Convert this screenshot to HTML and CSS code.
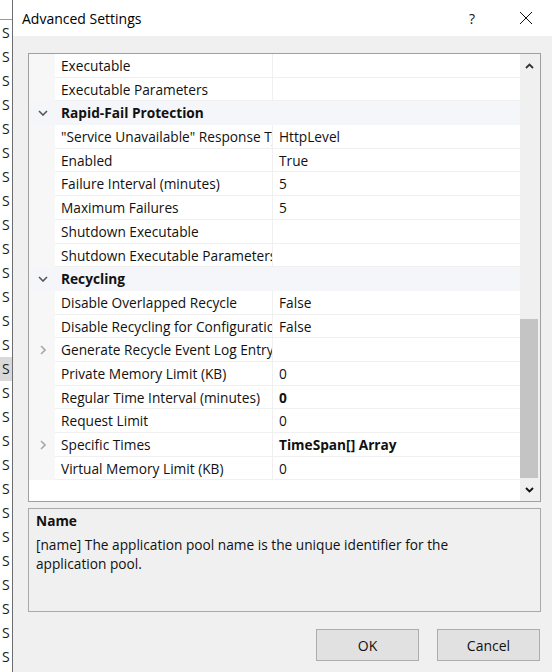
FILE: index.html
```html
<!DOCTYPE html>
<html>
<head>
<meta charset="utf-8">
<link rel="stylesheet" href="styles.css">
</head>
<body>
<div class="screen">
  <div class="behind">
    <div class="behind-head"></div>
    <div class="behind-list">
      <div class="bi">S</div><div class="bi">S</div><div class="bi">S</div><div class="bi">S</div><div class="bi">S</div>
      <div class="bi">S</div><div class="bi">S</div><div class="bi">S</div><div class="bi">S</div><div class="bi">S</div>
      <div class="bi">S</div><div class="bi">S</div><div class="bi">S</div><div class="bi">S</div><div class="bi sel">S</div>
      <div class="bi">S</div><div class="bi">S</div><div class="bi">S</div><div class="bi">S</div><div class="bi">S</div>
      <div class="bi">S</div><div class="bi">S</div><div class="bi">S</div><div class="bi">S</div><div class="bi">S</div>
      <div class="bi">S</div><div class="bi">S</div>
    </div>
  </div>
  <div class="dialog">
    <div class="titlebar">
      <span class="title">Advanced Settings</span>
      <span class="help">?</span>
      <span class="close"><svg width="14" height="14" viewBox="0 0 14 14"><path d="M1 1L13 13M13 1L1 13" stroke="#111" stroke-width="1" fill="none"/></svg></span>
    </div>
    <div class="body">
      <div class="grid">
        <div class="rows">
          <div class="row"><div class="gut"></div><div class="name">Executable</div><div class="val"></div></div>
          <div class="row"><div class="gut"></div><div class="name">Executable Parameters</div><div class="val"></div></div>
          <div class="row cat"><div class="gut"><svg class="chev" width="10" height="6" viewBox="0 0 10 6"><path d="M1 1L5 5L9 1" stroke="#555" stroke-width="1.6" fill="none"/></svg></div><div class="catname">Rapid-Fail Protection</div></div>
          <div class="row"><div class="gut"></div><div class="name">"Service Unavailable" Response Type</div><div class="val">HttpLevel</div></div>
          <div class="row"><div class="gut"></div><div class="name">Enabled</div><div class="val">True</div></div>
          <div class="row"><div class="gut"></div><div class="name">Failure Interval (minutes)</div><div class="val">5</div></div>
          <div class="row"><div class="gut"></div><div class="name">Maximum Failures</div><div class="val">5</div></div>
          <div class="row"><div class="gut"></div><div class="name">Shutdown Executable</div><div class="val"></div></div>
          <div class="row"><div class="gut"></div><div class="name">Shutdown Executable Parameters</div><div class="val"></div></div>
          <div class="row cat"><div class="gut"><svg class="chev" width="10" height="6" viewBox="0 0 10 6"><path d="M1 1L5 5L9 1" stroke="#555" stroke-width="1.6" fill="none"/></svg></div><div class="catname">Recycling</div></div>
          <div class="row"><div class="gut"></div><div class="name">Disable Overlapped Recycle</div><div class="val">False</div></div>
          <div class="row"><div class="gut"></div><div class="name">Disable Recycling for Configuration Changes</div><div class="val">False</div></div>
          <div class="row"><div class="gut"><svg class="chev" width="6" height="10" viewBox="0 0 6 10"><path d="M1 1L5 5L1 9" stroke="#a8a8a8" stroke-width="1.6" fill="none"/></svg></div><div class="name">Generate Recycle Event Log Entry</div><div class="val"></div></div>
          <div class="row"><div class="gut"></div><div class="name">Private Memory Limit (KB)</div><div class="val">0</div></div>
          <div class="row"><div class="gut"></div><div class="name">Regular Time Interval (minutes)</div><div class="val bold">0</div></div>
          <div class="row"><div class="gut"></div><div class="name">Request Limit</div><div class="val">0</div></div>
          <div class="row"><div class="gut"><svg class="chev" width="6" height="10" viewBox="0 0 6 10"><path d="M1 1L5 5L1 9" stroke="#a8a8a8" stroke-width="1.6" fill="none"/></svg></div><div class="name">Specific Times</div><div class="val bold">TimeSpan[] Array</div></div>
          <div class="row"><div class="gut"></div><div class="name">Virtual Memory Limit (KB)</div><div class="val">0</div></div>
        </div>
        <div class="scrollbar">
          <div class="sb-btn"><svg width="9" height="6" viewBox="0 0 9 6"><path d="M1 5L4.5 1.5L8 5" stroke="#333" stroke-width="1.8" fill="none"/></svg></div>
          <div class="sb-track"><div class="sb-thumb"></div></div>
          <div class="sb-btn"><svg width="9" height="6" viewBox="0 0 9 6"><path d="M1 1L4.5 4.5L8 1" stroke="#111" stroke-width="1.8" fill="none"/></svg></div>
        </div>
      </div>
      <div class="desc">
        <div class="desc-title">Name</div>
        <div class="desc-text">[name] The application pool name is the unique identifier for the application pool.</div>
      </div>
      <div class="buttons">
        <button class="btn">OK</button>
        <button class="btn">Cancel</button>
      </div>
    </div>
  </div>
</div>
</body>
</html>
```
FILE: styles.css
```css
* { box-sizing: border-box; }
html, body { margin: 0; padding: 0; }
body {
  width: 552px;
  height: 672px;
  overflow: hidden;
  background: #ffffff;
  font-family: "Open Sans", "Noto Sans", sans-serif;
  font-size: 13.7px;
  color: #111;
}
.screen { display: flex; width: 552px; height: 672px; }
.behind {
  width: 13px;
  border-right: 1px solid #6e6e6e;
  background: #fff;
  overflow: hidden;
  flex: none;
}
.behind-head { height: 20px; border-bottom: 1px solid #9a9a9a; }
.behind-list { display: flex; flex-direction: column; }
.bi {
  height: 24px;
  line-height: 24px;
  padding-left: 2px;
  font-size: 14px;
  color: #1a1a1a;
  white-space: nowrap;
}
.bi:first-child { margin-top: 1px; }
.bi.sel { background: #d9d9d9; }
.dialog {
  flex: 1;
  display: flex;
  flex-direction: column;
  background: #f0f0f0;
}
.titlebar {
  height: 36px;
  background: #fff;
  display: flex;
  align-items: center;
  padding-left: 9px;
  flex: none;
}
.title { font-size: 14px; color: #000; flex: 1; }
.help { width: 56px; text-align: center; font-size: 14px; color: #111; margin-right: 0; }
.close { width: 52px; display: flex; justify-content: center; align-items: center; margin-right: 0; }
.body {
  flex: 1;
  display: flex;
  flex-direction: column;
  padding: 17px 11px 0 15px;
}
.grid {
  height: 449px;
  border: 1px solid #a0a0a0;
  background: #fff;
  display: flex;
  flex: none;
}
.rows { flex: 1; display: flex; flex-direction: column; }
.row { display: flex; height: 23.7px; flex: none; }
.gut {
  width: 26px;
  flex: none;
  background: #f7f7f7;
  display: flex;
  align-items: center;
  justify-content: center;
  padding-left: 2px;
}
.name {
  width: 218px;
  flex: none;
  padding-left: 6px;
  padding-top: 1px;
  line-height: 22px;
  white-space: nowrap;
  overflow: hidden;
  border-bottom: 1px solid #f0f0f0;
  border-right: 1px solid #f0f0f0;
}
.val {
  flex: 1;
  padding-left: 6px;
  padding-top: 1px;
  line-height: 22px;
  white-space: nowrap;
  overflow: hidden;
  border-bottom: 1px solid #f0f0f0;
}
.bold { font-weight: 700; }
.row.cat { background: #f4f6f9; }
.row.cat .gut { background: #f4f6f9; }
.catname {
  flex: 1;
  padding-left: 6px;
  padding-top: 1px;
  line-height: 22.7px;
  font-weight: 700;
  color: #111;
}
.chev { display: block; }
.scrollbar {
  width: 20px;
  flex: none;
  background: #f0f0f0;
  display: flex;
  flex-direction: column;
}
.sb-btn {
  height: 23px;
  display: flex;
  align-items: center;
  justify-content: center;
  padding-right: 2px;
}
.sb-track { flex: 1; display: flex; flex-direction: column; justify-content: flex-end; padding-right: 2px; }
.sb-thumb { height: 159px; background: #c4c4c4; }
.desc {
  margin-top: 6px;
  height: 104px;
  border: 1px solid #a9a9a9;
  padding: 3px 60px 3px 7px;
  flex: none;
}
.desc-title { font-weight: 700; line-height: 18px; color: #111; }
.desc-text { margin-top: 5px; line-height: 19px; color: #111; }
.buttons {
  display: flex;
  justify-content: flex-end;
  gap: 18px;
  margin-top: 17px;
  padding-right: 1px;
}
.btn {
  width: 103px;
  height: 32px;
  background: #e1e1e1;
  border: 1px solid #adadad;
  font-family: inherit;
  font-size: 14px;
  color: #111;
  padding: 0;
}
```
